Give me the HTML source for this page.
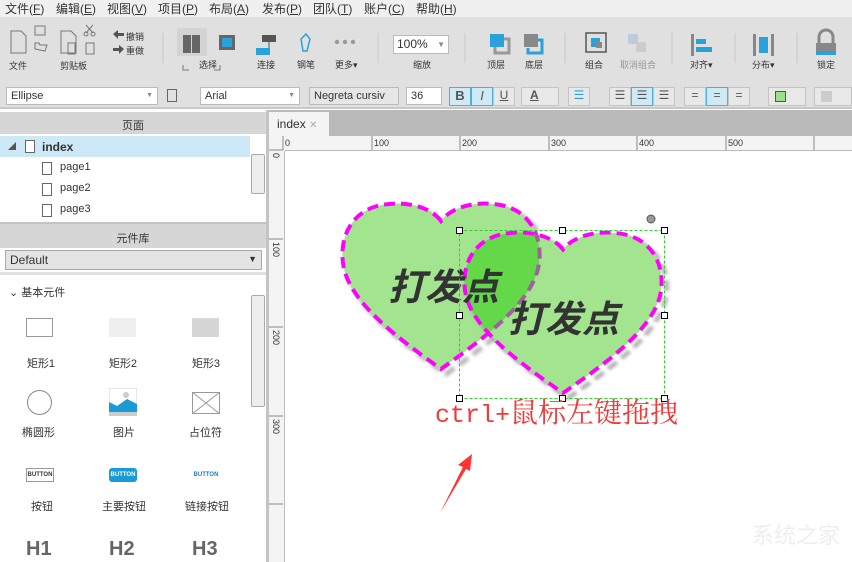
<!DOCTYPE html>
<html><head><meta charset="utf-8"><style>
*{margin:0;padding:0;box-sizing:border-box}
body{width:852px;height:562px;overflow:hidden;position:relative;background:#fff;font-family:"Liberation Sans","Noto Sans CJK SC",sans-serif;font-size:11px;color:#333}
.a{position:absolute}
.menu{left:0;top:0;width:852px;height:17px;background:#f0f0f0;font-size:12px}
.menu span{position:absolute;top:0}
.tb{left:0;top:17px;width:852px;height:66px;background:#e0e0e0}
.fb{left:0;top:83px;width:852px;height:26px;background:#e0e0e0;border-bottom:2px solid #c8c8c8}
.lbl{position:absolute;font-size:9px;color:#333;text-align:center}
.sel{position:absolute;background:#fff;border:1px solid #bbb;height:18px;top:4px;font-size:11px;padding:2px 4px}
.gbtn{position:absolute;top:4px;height:19px;border:1px solid #c4c4c4;background:#e8e8e8;color:#555;font-size:12px}
.hdr{background:#d6d6d6;font-size:11px;text-align:center}
.ico{position:absolute;width:10px;height:13px;border:1px solid #666;background:#fff}
.dash{stroke:#ff00ff;stroke-width:4;stroke-dasharray:11 6;fill:none}
</style></head><body>
<div class="a menu">
<span style="left:5px">文件(<u>F</u>)</span><span style="left:56px">编辑(<u>E</u>)</span><span style="left:107px">视图(<u>V</u>)</span><span style="left:158px">项目(<u>P</u>)</span><span style="left:209px">布局(<u>A</u>)</span><span style="left:262px">发布(<u>P</u>)</span><span style="left:313px">团队(<u>T</u>)</span><span style="left:364px">账户(<u>C</u>)</span><span style="left:416px">帮助(<u>H</u>)</span>
</div>
<div class="a tb">
<svg width="852" height="66" style="position:absolute;left:0;top:0">
<g fill="none" stroke="#777" stroke-width="1">
<path d="M11 14h10l5 5v17h-15z"/><rect x="35" y="9" width="10" height="9"/><path d="M35 32v-6h4l1 2h7l-2 6z"/>
<path d="M61 14h10l5 5v17h-15z"/><path d="M68 26h7v11h-7z"/><path d="M86 26h8v11h-8z"/><circle cx="86" cy="17" r="2"/><circle cx="93" cy="17" r="2"/><path d="M86 8l7 8M93 8l-7 8"/>
<path d="M183 48v5h6M214 53h6v-5"/>
</g>
<path d="M113 17l5-4v3h6v3h-6v3z" fill="#555"/><path d="M124 32l-5-4v3h-6v3h6v3z" fill="#555"/>
<rect x="177" y="11" width="30" height="28" fill="#d3d3d3"/>
<rect x="183" y="18" width="8" height="18" fill="#666"/><rect x="192" y="18" width="8" height="18" fill="#666"/>
<rect x="219" y="18" width="16" height="15" fill="#666"/><rect x="222" y="21" width="10" height="9" fill="#29a2dc"/>
<rect x="262" y="18" width="14" height="7" fill="#555"/><rect x="256" y="31" width="14" height="7" fill="#29a2dc"/><path d="M269 25v6" stroke="#555"/>
<path d="M301 22l5-5 4 5-3 12h-4z" fill="none" stroke="#29a2dc" stroke-width="1.5"/>
<circle cx="337" cy="25" r="2.2" fill="#999"/><circle cx="345" cy="25" r="2.2" fill="#999"/><circle cx="353" cy="25" r="2.2" fill="#999"/>
<rect x="490" y="17" width="14" height="13" fill="#29a2dc"/><path d="M504 22h5v14h-14v-6" fill="none" stroke="#999" stroke-width="3"/>
<rect x="524" y="17" width="14" height="13" fill="#888"/><path d="M538 23h4v13h-14v-5" fill="none" stroke="#29a2dc" stroke-width="3"/>
<rect x="586" y="16" width="20" height="19" fill="none" stroke="#555" stroke-width="1.5"/><rect x="591" y="21" width="9" height="9" fill="#29a2dc"/><rect x="596" y="25" width="6" height="6" fill="#888"/>
<rect x="628" y="17" width="10" height="10" fill="#bcd"/><rect x="636" y="25" width="10" height="10" fill="#ccc"/>
<rect x="691" y="17" width="3" height="22" fill="#888"/><rect x="696" y="22" width="10" height="5" fill="#29a2dc"/><rect x="696" y="30" width="16" height="5" fill="#29a2dc"/>
<rect x="753" y="17" width="3" height="22" fill="#888"/><rect x="771" y="17" width="3" height="22" fill="#888"/><rect x="759" y="20" width="9" height="16" fill="#29a2dc"/>
<path d="M819 26v-6a7 7 0 0 1 14 0v6" fill="none" stroke="#888" stroke-width="3"/><rect x="816" y="26" width="20" height="8" fill="#888"/><rect x="816" y="34" width="20" height="4" fill="#29a2dc"/>
<path d="M163 16v30M378 16v30M465 16v30M565 16v30M672 16v30M735 16v30M797 16v30" stroke="#c8c8c8"/>
</svg>
<div class="lbl" style="left:9px;top:42px">文件</div><div class="lbl" style="left:60px;top:42px">剪贴板</div>
<div class="lbl" style="left:126px;top:13px">撤销</div><div class="lbl" style="left:126px;top:27px">重做</div>
<div class="lbl" style="left:199px;top:41px">选择</div><div class="lbl" style="left:257px;top:41px">连接</div><div class="lbl" style="left:297px;top:41px">钢笔</div><div class="lbl" style="left:335px;top:41px">更多▾</div>
<div style="position:absolute;left:393px;top:18px;width:56px;height:19px;background:#fff;border:1px solid #bbb;font-size:12px;padding:1px 3px">100%<span style="position:absolute;right:3px;color:#888;font-size:8px;top:4px">▼</span></div>
<div class="lbl" style="left:413px;top:41px">缩放</div><div class="lbl" style="left:487px;top:41px">顶层</div><div class="lbl" style="left:525px;top:41px">底层</div><div class="lbl" style="left:585px;top:41px">组合</div><div class="lbl" style="left:620px;top:41px;color:#999">取消组合</div><div class="lbl" style="left:690px;top:41px">对齐▾</div><div class="lbl" style="left:752px;top:41px">分布▾</div><div class="lbl" style="left:817px;top:41px">锁定</div>
</div>
<div class="a fb">
<div class="sel" style="left:6px;width:152px">Ellipse<span style="position:absolute;right:4px;top:4px;font-size:7px;color:#888">▼</span></div>
<div class="a" style="left:167px;top:6px;width:10px;height:13px;border:1px solid #666"></div>
<div class="sel" style="left:200px;width:100px">Arial<span style="position:absolute;right:4px;top:4px;font-size:7px;color:#888">▼</span></div>
<div class="sel" style="left:309px;width:90px;background:#e6e6e6">Negreta cursiv</div>
<div class="sel" style="left:406px;width:36px">36</div>
<div class="gbtn" style="left:449px;width:22px;background:#cfe9f5;border-color:#4ab0e0;font-weight:bold;text-align:center;font-size:13px">B</div>
<div class="gbtn" style="left:471px;width:22px;background:#cfe9f5;border-color:#4ab0e0;font-style:italic;text-align:center;font-size:13px">I</div>
<div class="gbtn" style="left:493px;width:22px;text-align:center;text-decoration:underline">U</div>
<div class="gbtn" style="left:521px;width:38px;text-align:left;padding-left:8px;text-decoration:underline;font-weight:bold">A</div>
<div class="gbtn" style="left:568px;width:22px;text-align:center;color:#29a2dc">☰</div>
<div class="gbtn" style="left:609px;width:22px;text-align:center">☰</div><div class="gbtn" style="left:631px;width:22px;background:#cfe9f5;border-color:#4ab0e0;text-align:center">☰</div><div class="gbtn" style="left:653px;width:22px;text-align:center">☰</div>
<div class="gbtn" style="left:684px;width:22px;text-align:center">=</div><div class="gbtn" style="left:706px;width:22px;background:#cfe9f5;border-color:#4ab0e0;text-align:center">=</div><div class="gbtn" style="left:728px;width:22px;text-align:center">=</div>
<div class="gbtn" style="left:768px;width:38px"><div style="position:absolute;left:6px;top:3px;width:11px;height:11px;background:#9de08a;border:1px solid #555"></div></div>
<div class="gbtn" style="left:814px;width:38px"><div style="position:absolute;left:6px;top:3px;width:11px;height:11px;background:#ccc"></div></div>
</div>
<!-- left panel -->
<div class="a" style="left:0;top:110px;width:266px;height:452px;background:#fff"></div>
<div class="a hdr" style="left:0;top:112px;width:266px;height:22px;padding-top:5px">页面</div>
<div class="a" style="left:0;top:136px;width:250px;height:21px;background:#cde8f7"></div>
<div class="a" style="left:8px;top:141px;font-size:8px;color:#555">◢</div>
<div class="ico" style="left:25px;top:140px"></div><div class="a" style="left:42px;top:140px;font-weight:bold;font-size:12px">index</div>
<div class="ico" style="left:42px;top:162px"></div><div class="a" style="left:60px;top:161px">page1</div>
<div class="ico" style="left:42px;top:183px"></div><div class="a" style="left:60px;top:182px">page2</div>
<div class="ico" style="left:42px;top:204px"></div><div class="a" style="left:60px;top:203px">page3</div>
<div class="a" style="left:251px;top:154px;width:14px;height:40px;border:1px solid #aaa;border-radius:2px;background:#eee"></div>
<div class="a" style="left:0;top:222px;width:266px;height:2px;background:#c4c4c4"></div>
<div class="a hdr" style="left:0;top:224px;width:266px;height:24px;padding-top:6px">元件库</div>
<div class="a" style="left:5px;top:250px;width:257px;height:20px;background:#e4e4e4;border:1px solid #aaa;font-size:12px;padding:2px 4px">Default<span style="position:absolute;right:4px;top:3px;font-size:9px">▼</span></div>
<div class="a" style="left:0;top:272px;width:266px;height:3px;background:#e0e0e0"></div>
<div class="a" style="left:9px;top:284px">⌄ 基本元件</div>
<div class="a" style="left:251px;top:295px;width:14px;height:112px;border:1px solid #aaa;border-radius:2px;background:#eee"></div>
<div class="a" style="left:26px;top:318px;width:27px;height:19px;border:1px solid #999"></div>
<div class="a" style="left:109px;top:318px;width:27px;height:19px;background:#efefef"></div>
<div class="a" style="left:192px;top:318px;width:27px;height:19px;background:#d6d6d6"></div>
<div class="a" style="left:26px;top:355px;width:30px;text-align:center">矩形1</div><div class="a" style="left:108px;top:355px;width:30px;text-align:center">矩形2</div><div class="a" style="left:191px;top:355px;width:30px;text-align:center">矩形3</div>
<div class="a" style="left:27px;top:390px;width:25px;height:25px;border:1px solid #888;border-radius:50%"></div>
<svg class="a" style="left:109px;top:388px" width="28" height="28"><rect width="28" height="28" fill="#fff" stroke="#ccc"/><path d="M0 14l8 4 10-7 10 5v12h-28z" fill="#1a9ad6"/><rect y="24" width="28" height="4" fill="#ccc"/><circle cx="17" cy="7" r="3" fill="#ccc"/></svg>
<svg class="a" style="left:192px;top:392px" width="28" height="22"><rect x=".5" y=".5" width="27" height="21" fill="none" stroke="#999"/><path d="M0 0l28 22M28 0l-28 22" stroke="#999"/></svg>
<div class="a" style="left:22px;top:424px">椭圆形</div><div class="a" style="left:113px;top:424px">图片</div><div class="a" style="left:189px;top:424px">占位符</div>
<div class="a" style="left:26px;top:468px;width:28px;height:14px;border:1px solid #999;font-size:6px;font-weight:bold;text-align:center;line-height:12px">BUTTON</div>
<div class="a" style="left:109px;top:468px;width:28px;height:14px;background:#1a9ad6;color:#fff;border-radius:3px;font-size:6px;font-weight:bold;text-align:center;line-height:14px">BUTTON</div>
<div class="a" style="left:192px;top:468px;width:28px;height:14px;color:#1a7ac6;font-size:6px;font-weight:bold;text-align:center;line-height:14px">BUTTON</div>
<div class="a" style="left:31px;top:498px">按钮</div><div class="a" style="left:102px;top:498px">主要按钮</div><div class="a" style="left:185px;top:498px">链接按钮</div>
<div class="a" style="left:26px;top:538px;font-size:20px;font-weight:bold;color:#666">H1</div><div class="a" style="left:109px;top:538px;font-size:20px;font-weight:bold;color:#666">H2</div><div class="a" style="left:192px;top:538px;font-size:20px;font-weight:bold;color:#666">H3</div>
<div class="a" style="left:266px;top:110px;width:3px;height:452px;background:#c4c4c4"></div>
<!-- tabs -->
<div class="a" style="left:269px;top:110px;width:583px;height:26px;background:#bababa"></div>
<div class="a" style="left:269px;top:112px;width:60px;height:24px;background:#f4f4f4;padding:5px 0 0 8px;font-size:12px">index <span style="color:#aaa;font-size:10px">✕</span></div>
<svg class="a" style="left:269px;top:136px" width="583" height="426">
<rect width="583" height="15" fill="#f4f4f4"/><rect width="16" height="426" fill="#f4f4f4"/>
<path d="M16 14.5h567M15.5 15v411" stroke="#bbb"/>
<g stroke="#888"><path d="M14 0v14M103 0v14M191 0v14M280 0v14M368 0v14M457 0v14M545 0v14"/><path d="M0 14h14M0 103h14M0 191h14M0 280h14M0 368h14"/></g>
<g font-size="9" fill="#333"><text x="16" y="10">0</text><text x="105" y="10">100</text><text x="193" y="10">200</text><text x="282" y="10">300</text><text x="370" y="10">400</text><text x="459" y="10">500</text>
<text transform="translate(4,17) rotate(90)">0</text><text transform="translate(4,106) rotate(90)">100</text><text transform="translate(4,194) rotate(90)">200</text><text transform="translate(4,283) rotate(90)">300</text></g>
</svg>
<!-- canvas -->
<svg class="a" style="left:0;top:0" width="852" height="562">
<defs>
<path id="h" d="M100 18C88 2 60-3 36 3C8 11-3 38 3 66C12 102 58 136 100 166C142 136 188 102 197 66C203 38 192 11 164 3C140-3 112 2 100 18Z"/>
<clipPath id="c2"><use href="#h" transform="translate(463,232) scale(1,0.97)"/></clipPath>
<filter id="sh" x="-10%" y="-10%" width="130%" height="130%"><feGaussianBlur stdDeviation="1.5"/></filter>
</defs>
<g transform="translate(346,208)" filter="url(#sh)"><use href="#h" fill="none" stroke="#999" stroke-width="5" stroke-dasharray="11 6" opacity=".7"/></g>
<g transform="translate(341,203)"><use href="#h" fill="#a3e48f"/><use href="#h" class="dash"/></g>
<g transform="translate(468,237) scale(1,0.97)" filter="url(#sh)"><use href="#h" fill="none" stroke="#999" stroke-width="5" stroke-dasharray="11 6" opacity=".7"/></g>
<g transform="translate(463,232) scale(1,0.97)"><use href="#h" fill="#a3e48f"/></g>
<g clip-path="url(#c2)"><g transform="translate(341,203)"><use href="#h" fill="#63d94a"/><use href="#h" fill="none" stroke="#a060a0" stroke-width="4" stroke-dasharray="11 6"/></g></g>
<g transform="translate(463,232) scale(1,0.97)"><use href="#h" class="dash"/></g>
<g font-family="Noto Sans CJK SC,sans-serif" font-weight="bold" font-style="italic" font-size="37" fill="#333"><text x="388" y="300">打发点</text><text x="508" y="332">打发点</text></g>
<rect x="459.5" y="230.5" width="205" height="168" fill="none" stroke="#3c3" stroke-dasharray="3 2"/>
<g fill="#fff" stroke="#000"><rect x="456.5" y="227.5" width="6" height="6"/><rect x="559.5" y="227.5" width="6" height="6"/><rect x="661.5" y="227.5" width="6" height="6"/><rect x="456.5" y="312.5" width="6" height="6"/><rect x="661.5" y="312.5" width="6" height="6"/><rect x="456.5" y="395.5" width="6" height="6"/><rect x="559.5" y="395.5" width="6" height="6"/><rect x="661.5" y="395.5" width="6" height="6"/></g>
<circle cx="651" cy="219" r="4" fill="#999" stroke="#555"/>
<text y="422" fill="#f03a3a"><tspan x="435" font-family="Liberation Mono,monospace" font-size="25">ctrl+</tspan><tspan x="510" font-family="Noto Serif CJK SC,serif" font-size="28">鼠标左键拖拽</tspan></text>
<path d="M440 513L463 467L458 465L472 454L470 471L466 469Z" fill="#f33"/>
<text x="752" y="543" font-size="22" fill="#eee" font-family="Noto Sans CJK SC,sans-serif">系统之家</text>
</svg>
</body></html>
